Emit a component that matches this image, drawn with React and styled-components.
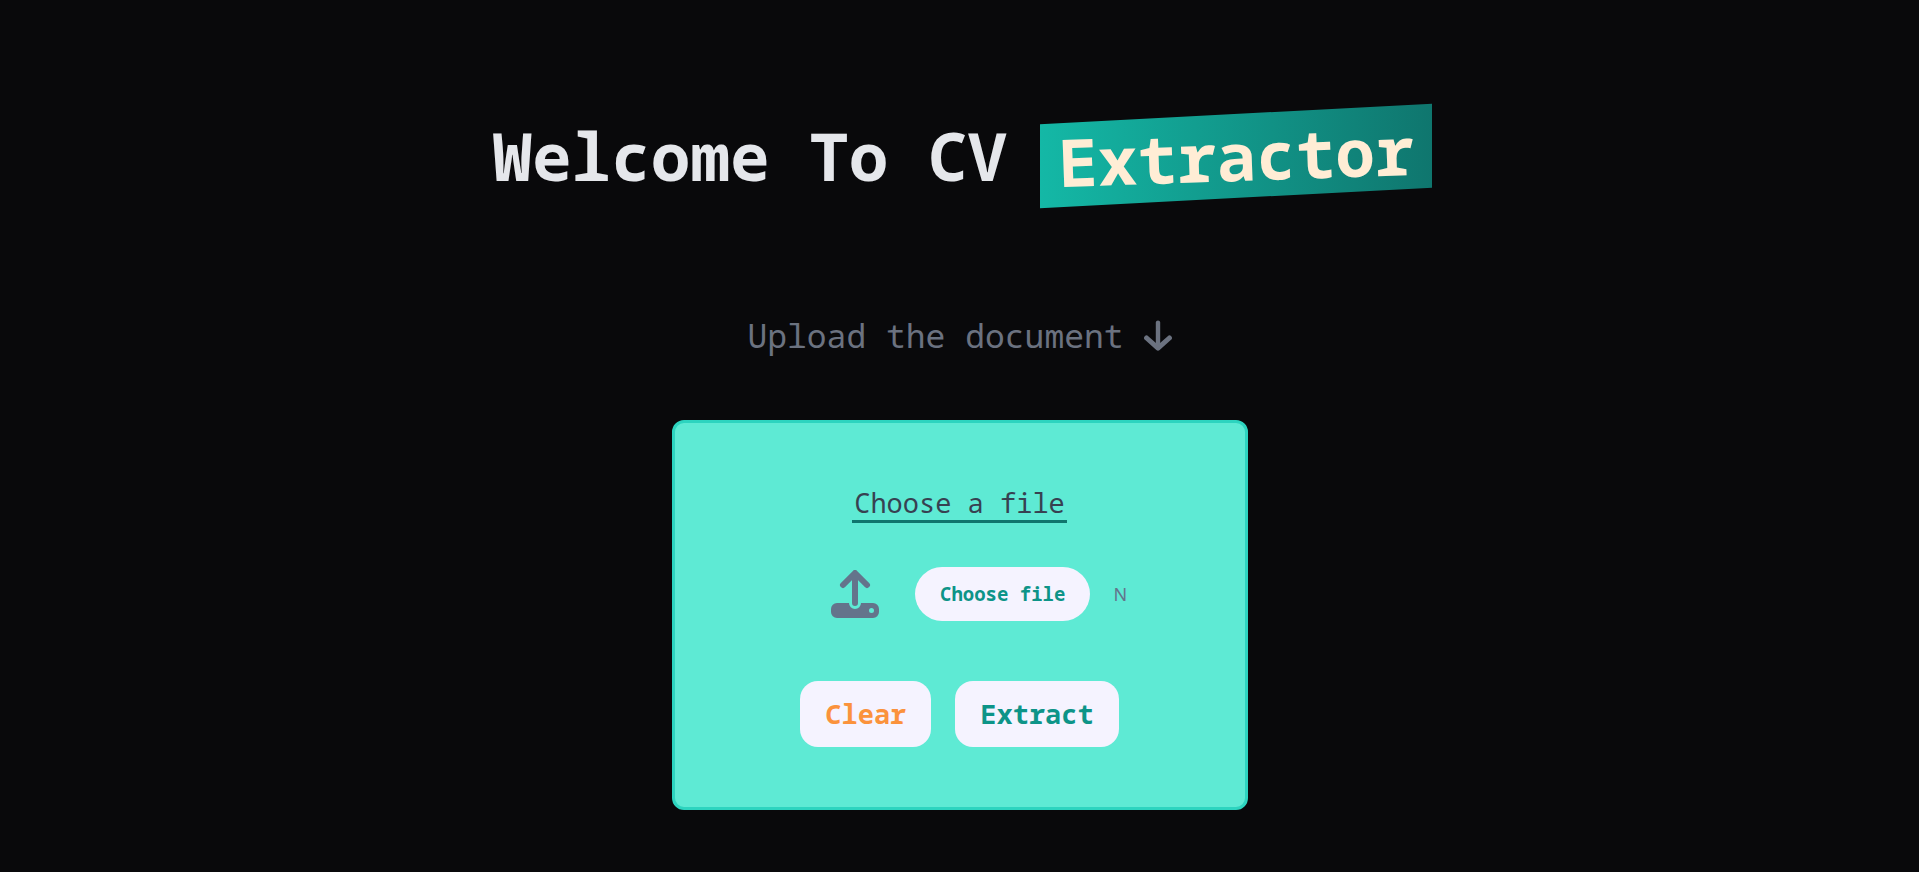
import React from "react";
import styled, { createGlobalStyle } from "styled-components";

const GlobalStyle = createGlobalStyle`
  *, *::before, *::after { box-sizing: border-box; }
  body {
    margin: 0;
    background: #09090b;
    font-family: "Noto Sans Mono", "DejaVu Sans Mono", monospace;
  }
`;

const Page = styled.main`
  display: flex;
  flex-direction: column;
  align-items: center;
  min-height: 100vh;
  padding: 114px 24px 62px;
`;

const Title = styled.h1`
  display: flex;
  flex-wrap: wrap;
  justify-content: center;
  gap: 33px;
  margin: 0;
  padding-left: 6px;
  color: #e5e7eb;
  font-size: 66px;
  font-weight: 700;
  line-height: 82px;
`;

const Badge = styled.span`
  position: relative;
  z-index: 0;
  padding: 0 18px 2px;
  color: #ffedd5;

  &::before {
    content: "";
    position: absolute;
    inset: 0;
    z-index: -1;
    background: linear-gradient(to right, #14b8a6, #0f766e);
    transform: skewY(-3deg);
  }
`;

const BadgeText = styled.span`
  display: inline-block;
  transform: rotate(-2deg);
`;

const Prompt = styled.p`
  display: flex;
  align-items: center;
  gap: 20px;
  margin: 114px 0 0;
  color: #6b7280;
  font-size: 33px;
  line-height: 48px;
`;

const Card = styled.form`
  display: flex;
  flex-direction: column;
  align-items: center;
  width: 100%;
  max-width: 576px;
  margin-top: 60px;
  padding: 62px 24px 60px;
  background: #5eead4;
  border: 3px solid #2dd4bf;
  border-radius: 12px;
`;

const FileLabel = styled.label`
  padding: 0 2px;
  color: #374151;
  border-bottom: 3px solid #0f766e;
  font-size: 27px;
  line-height: 35px;
`;

const FileRow = styled.div`
  display: flex;
  align-items: center;
  gap: 36px;
  width: 100%;
  max-width: 337px;
  margin-top: 44px;
  padding-left: 40px;
  color: #64748b;
`;

const Picker = styled.div`
  display: flex;
  align-items: center;
  gap: 23px;
  font-family: "Noto Sans", sans-serif;
  font-size: 18px;
`;

const HiddenInput = styled.input`
  position: absolute;
  width: 1px;
  height: 1px;
  opacity: 0;
`;

const PickerButton = styled.label`
  padding: 0 25px;
  color: #0d9488;
  background: #f5f3ff;
  border-radius: 27px;
  font-family: "Noto Sans Mono", "DejaVu Sans Mono", monospace;
  font-size: 19px;
  font-weight: 700;
  line-height: 54px;
  white-space: nowrap;
  cursor: pointer;
`;

const Actions = styled.div`
  display: flex;
  gap: 24px;
  margin-top: 60px;
`;

const ActionButton = styled.button`
  padding: 0 25px;
  color: ${({ $tone }) => ($tone === "warn" ? "#fb923c" : "#0d9488")};
  background: #f5f3ff;
  border: 0;
  border-radius: 18px;
  font: inherit;
  font-size: 27px;
  font-weight: 700;
  line-height: 66px;
  cursor: pointer;
`;

const ArrowDown = () => (
  <svg width="28" height="32" viewBox="0 0 28 32" aria-hidden="true">
    <path
      d="M14 2.6V27"
      fill="none"
      stroke="currentColor"
      strokeWidth="4.4"
      strokeLinecap="round"
    />
    <path
      d="M2.6 18 14 28.2 25.4 18"
      fill="none"
      stroke="currentColor"
      strokeWidth="5"
      strokeLinecap="round"
      strokeLinejoin="round"
    />
  </svg>
);

const UploadIcon = () => (
  <svg width="48" height="48" viewBox="0 0 48 48" aria-hidden="true">
    <path
      d="M12 15 24 3 36 15M24 4V33"
      fill="none"
      stroke="currentColor"
      strokeWidth="6"
      strokeLinecap="round"
      strokeLinejoin="round"
    />
    <path
      fill="currentColor"
      fillRule="evenodd"
      d="M6 33H18A6 6 0 0 0 30 33H42A6 6 0 0 1 48 39V42A6 6 0 0 1 42 48H6A6 6 0 0 1 0 42V39A6 6 0 0 1 6 33ZM40.5 38A2.5 2.5 0 1 0 40.5 43A2.5 2.5 0 1 0 40.5 38Z"
    />
  </svg>
);

export default function App() {
  return (
    <>
      <GlobalStyle />
      <Page>
        <Title>
          <span>Welcome To CV</span>
          <Badge>
            <BadgeText>Extractor</BadgeText>
          </Badge>
        </Title>
        <Prompt>
          Upload the document
          <ArrowDown />
        </Prompt>
        <Card onSubmit={(event) => event.preventDefault()}>
          <FileLabel htmlFor="document">Choose a file</FileLabel>
          <FileRow>
            <UploadIcon />
            <Picker>
              <HiddenInput id="document" type="file" />
              <PickerButton htmlFor="document">Choose file</PickerButton>
              <span>N</span>
            </Picker>
          </FileRow>
          <Actions>
            <ActionButton type="reset" $tone="warn">Clear</ActionButton>
            <ActionButton type="submit">Extract</ActionButton>
          </Actions>
        </Card>
      </Page>
    </>
  );
}
